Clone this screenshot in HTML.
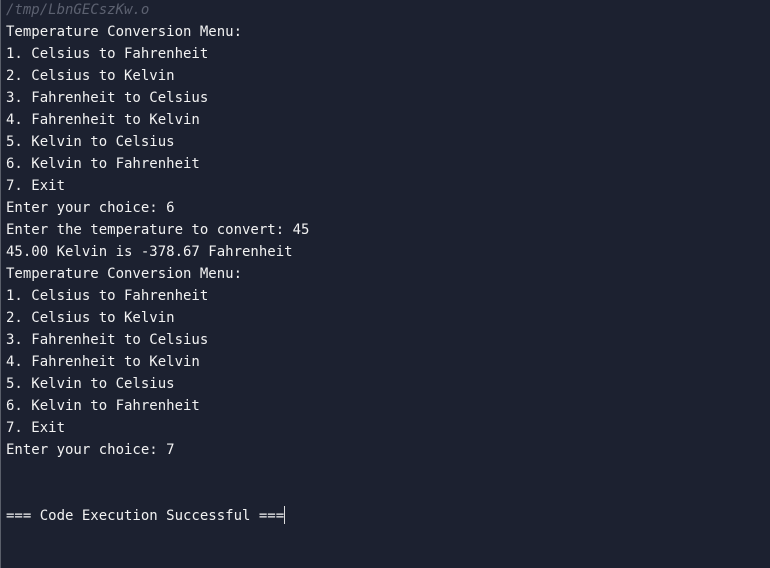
<!DOCTYPE html>
<html><head><style>
html,body{margin:0;padding:0;width:770px;height:568px;overflow:hidden;background:#1c2130;}
.b{position:absolute;left:0;top:0;width:1px;height:568px;background:#5a5f6a;}
pre{position:absolute;left:6px;top:-1px;margin:0;font-family:"DejaVu Sans Mono","Liberation Mono",monospace;font-size:14px;line-height:22px;color:#f2f2f2;}
.p{color:#5c6170;font-style:italic;}
.c{display:inline-block;width:1px;height:18px;background:#ddd;vertical-align:-4px;}
</style></head><body><div class="b"></div>
<pre><span class="p">/tmp/LbnGECszKw.o</span>
Temperature Conversion Menu:
1. Celsius to Fahrenheit
2. Celsius to Kelvin
3. Fahrenheit to Celsius
4. Fahrenheit to Kelvin
5. Kelvin to Celsius
6. Kelvin to Fahrenheit
7. Exit
Enter your choice: 6
Enter the temperature to convert: 45
45.00 Kelvin is -378.67 Fahrenheit
Temperature Conversion Menu:
1. Celsius to Fahrenheit
2. Celsius to Kelvin
3. Fahrenheit to Celsius
4. Fahrenheit to Kelvin
5. Kelvin to Celsius
6. Kelvin to Fahrenheit
7. Exit
Enter your choice: 7


=== Code Execution Successful ===<span class="c"></span></pre>
</body></html>
